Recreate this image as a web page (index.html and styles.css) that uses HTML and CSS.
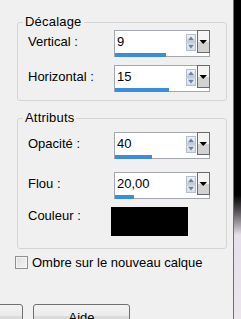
FILE: index.html
```html
<!DOCTYPE html>
<html lang="fr">
<head>
<meta charset="utf-8">
<link rel="stylesheet" href="styles.css">
</head>
<body>
<div class="main">
  <fieldset class="group g1">
    <legend>Décalage</legend>
    <div class="row">
      <label>Vertical :</label>
      <div class="field">
        <div class="top">
          <span class="val">9</span>
          <svg class="spin" width="10" height="17" viewBox="0 0 10 17"><defs><linearGradient id="sg" x1="0" y1="0" x2="0" y2="1"><stop offset="0" stop-color="#f2f5f9"/><stop offset="1" stop-color="#d3dbe6"/></linearGradient></defs><rect x="0.5" y="0.5" width="9" height="7.5" fill="url(#sg)" stroke="#b4bdca"/><polygon points="2,6.2 5,2.6 8,6.2" fill="#6d80a6"/><rect x="0.5" y="9" width="9" height="7.5" fill="url(#sg)" stroke="#b4bdca"/><polygon points="2,10.8 8,10.8 5,14.4" fill="#6d80a6"/></svg>
          <svg class="drop" width="13" height="23" viewBox="0 0 13 23"><rect x="0.5" y="0.5" width="12" height="22" fill="#d2d2d2" stroke="#6a6a6a"/><rect x="1" y="1" width="11" height="11" fill="#f4f4f4"/><polygon points="2.5,10 10,10 6.2,14" fill="#000"/></svg>
        </div>
        <div class="bar" style="width:51px"></div>
      </div>
    </div>
    <div class="row">
      <label>Horizontal :</label>
      <div class="field">
        <div class="top">
          <span class="val">15</span>
          <svg class="spin" width="10" height="17" viewBox="0 0 10 17"><rect x="0.5" y="0.5" width="9" height="7.5" fill="url(#sg)" stroke="#b4bdca"/><polygon points="2,6.2 5,2.6 8,6.2" fill="#6d80a6"/><rect x="0.5" y="9" width="9" height="7.5" fill="url(#sg)" stroke="#b4bdca"/><polygon points="2,10.8 8,10.8 5,14.4" fill="#6d80a6"/></svg>
          <svg class="drop" width="13" height="23" viewBox="0 0 13 23"><rect x="0.5" y="0.5" width="12" height="22" fill="#d2d2d2" stroke="#6a6a6a"/><rect x="1" y="1" width="11" height="11" fill="#f4f4f4"/><polygon points="2.5,10 10,10 6.2,14" fill="#000"/></svg>
        </div>
        <div class="bar" style="width:54px"></div>
      </div>
    </div>
  </fieldset>

  <fieldset class="group g2">
    <legend>Attributs</legend>
    <div class="row">
      <label>Opacité :</label>
      <div class="field">
        <div class="top">
          <span class="val">40</span>
          <svg class="spin" width="10" height="17" viewBox="0 0 10 17"><rect x="0.5" y="0.5" width="9" height="7.5" fill="url(#sg)" stroke="#b4bdca"/><polygon points="2,6.2 5,2.6 8,6.2" fill="#6d80a6"/><rect x="0.5" y="9" width="9" height="7.5" fill="url(#sg)" stroke="#b4bdca"/><polygon points="2,10.8 8,10.8 5,14.4" fill="#6d80a6"/></svg>
          <svg class="drop" width="13" height="23" viewBox="0 0 13 23"><rect x="0.5" y="0.5" width="12" height="22" fill="#d2d2d2" stroke="#6a6a6a"/><rect x="1" y="1" width="11" height="11" fill="#f4f4f4"/><polygon points="2.5,10 10,10 6.2,14" fill="#000"/></svg>
        </div>
        <div class="bar" style="width:37px"></div>
      </div>
    </div>
    <div class="row">
      <label>Flou :</label>
      <div class="field">
        <div class="top">
          <span class="val">20,00</span>
          <svg class="spin" width="10" height="17" viewBox="0 0 10 17"><rect x="0.5" y="0.5" width="9" height="7.5" fill="url(#sg)" stroke="#b4bdca"/><polygon points="2,6.2 5,2.6 8,6.2" fill="#6d80a6"/><rect x="0.5" y="9" width="9" height="7.5" fill="url(#sg)" stroke="#b4bdca"/><polygon points="2,10.8 8,10.8 5,14.4" fill="#6d80a6"/></svg>
          <svg class="drop" width="13" height="23" viewBox="0 0 13 23"><rect x="0.5" y="0.5" width="12" height="22" fill="#d2d2d2" stroke="#6a6a6a"/><rect x="1" y="1" width="11" height="11" fill="#f4f4f4"/><polygon points="2.5,10 10,10 6.2,14" fill="#000"/></svg>
        </div>
        <div class="bar" style="width:19px"></div>
      </div>
    </div>
    <div class="row color-row">
      <label>Couleur :</label>
      <div class="swatch"></div>
    </div>
  </fieldset>

  <div class="check-row">
    <span class="checkbox"></span>
    <span class="check-label">Ombre sur le nouveau calque</span>
  </div>

  <div class="buttons">
    <button class="btn btn-cut" type="button">Annuler</button>
    <button class="btn" type="button">Aide</button>
  </div>
</div>
<div class="edge"></div>
</body>
</html>
```

FILE: styles.css
```css
* { box-sizing: border-box; }
html, body { margin: 0; padding: 0; }
body {
  width: 241px;
  height: 319px;
  overflow: hidden;
  background: #f0f0f0;
  font-family: "Liberation Sans", Arial, sans-serif;
  font-size: 13px;
  color: #000;
  display: flex;
}
.main {
  width: 233px;
  padding-left: 17px;
  display: flex;
  flex-direction: column;
  flex: none;
}
.edge {
  width: 8px;
  flex: none;
  border-left: 1px solid #6f6f6f;
  background: linear-gradient(#000 0, #000 195px, #5a545c 212px, #e6dee8 235px, #ece5ee 100%);
}
.group {
  margin: 0;
  width: 210px;
  border: 1px solid #d5d5d5;
  border-radius: 3px;
  display: flex;
  flex-direction: column;
  min-width: 0;
}
.group legend {
  padding: 0 2px;
  margin-left: -5px;
  line-height: 16px;
  font-size: 13px;
  letter-spacing: 0.2px;
}
.g1 {
  margin-top: 14px;
  padding: 0 0 8px 10px;
  gap: 8px;
}
.g2 {
  margin-top: 9px;
  padding: 6px 0 12px 10px;
  gap: 13px;
}
.row {
  display: flex;
  align-items: center;
  height: 27px;
}
.row label {
  width: 86px;
  flex: none;
  padding-bottom: 4px;
  line-height: 15px;
}
.field {
  width: 96px;
  height: 27px;
  border: 1px solid #a3a8ae;
  background: #fff;
  display: flex;
  flex-direction: column;
}
.top {
  flex: 1;
  display: flex;
  align-items: flex-start;
}
.val {
  flex: 1;
  padding: 3px 0 0 2px;
  line-height: 15px;
}
.spin {
  display: block;
  margin-top: 3px;
  margin-right: 1px;
}
.drop {
  display: block;
  margin-top: -1px;
  margin-right: -1px;
}
.bar {
  height: 4px;
  background: #3a8ce0;
  flex: none;
}
.color-row {
  height: 29px;
  align-items: flex-start;
  margin-top: -5px;
}
.color-row label {
  width: 83px;
  padding: 1px 0 0 0;
}
.swatch {
  width: 77px;
  height: 29px;
  background: #000;
}
.check-row {
  margin-top: 6px;
  margin-left: -2px;
  height: 15px;
  display: flex;
  align-items: center;
  gap: 4px;
}
.checkbox {
  width: 13px;
  height: 13px;
  border: 1px solid #8f8f8f;
  background: linear-gradient(135deg, #dcdcdc, #f6f6f6);
  box-shadow: inset 0 0 0 1px #f4f4f4;
}
.check-label { line-height: 15px; }
.buttons {
  margin-top: 34px;
  margin-left: -17px;
  display: flex;
  gap: 10px;
}
.btn {
  width: 97px;
  height: 23px;
  border: 1px solid #707070;
  border-radius: 3px;
  background: linear-gradient(#f3f3f3 0, #ebebeb 50%, #dddddd 51%, #cfcfcf 100%);
  font-family: "Liberation Sans", Arial, sans-serif;
  font-size: 13px;
  line-height: 15px;
  padding: 4px 0 0 0;
  color: #000;
  display: block;
  text-align: center;
  align-self: flex-start;
  margin: 0;
}
.btn-cut {
  margin-left: -74px;
}
```
